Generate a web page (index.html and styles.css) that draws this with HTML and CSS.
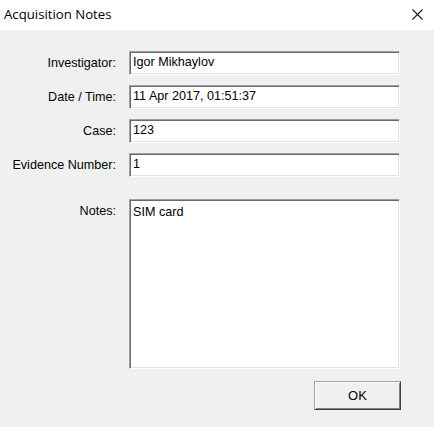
FILE: index.html
```html
<!DOCTYPE html>
<html>
<head>
<meta charset="utf-8">
<link rel="stylesheet" href="styles.css">
</head>
<body>
<div class="window">
  <div class="titlebar">
    <span class="title">Acquisition Notes</span>
    <svg class="close" width="11" height="11" viewBox="0 0 11 11"><path d="M0.5 0.5 L10.5 10.5 M10.5 0.5 L0.5 10.5" stroke="#1a1a1a" stroke-width="1.1" fill="none"/></svg>
  </div>
  <div class="form">
    <label class="lbl">Investigator:</label>
    <div class="field">Igor Mikhaylov</div>
    <label class="lbl">Date / Time:</label>
    <div class="field">11 Apr 2017, 01:51:37</div>
    <label class="lbl">Case:</label>
    <div class="field">123</div>
    <label class="lbl">Evidence Number:</label>
    <div class="field">1</div>
    <label class="lbl lbl-notes">Notes:</label>
    <div class="field notes">SIM card</div>
    <div class="actions">
      <div class="btn">OK</div>
    </div>
  </div>
</div>
</body>
</html>
```
FILE: styles.css
```css
html, body {
  margin: 0;
  padding: 0;
  background: #f0f0f0;
}
.window {
  width: 434px;
  height: 427px;
  background: #f0f0f0;
  font-family: "Liberation Sans", Arial, sans-serif;
  font-size: 12.6px;
  color: #000;
}
.titlebar {
  height: 30px;
  background: #fff;
  display: flex;
  align-items: center;
  justify-content: space-between;
  padding: 0 11px 0 4px;
}
.title {
  font-family: "Open Sans", "Noto Sans", sans-serif;
  font-size: 13.2px;
  color: #000;
  margin-top: -2px;
}
.close {
  display: block;
  margin-top: -1px;
}
.form {
  display: grid;
  grid-template-columns: 116px 271px;
  column-gap: 13px;
  row-gap: 10px;
  padding-top: 21px;
}
.lbl {
  text-align: right;
  line-height: 24px;
  height: 24px;
}
.field {
  height: 24px;
  box-sizing: border-box;
  background: #fff;
  border-top: 1px solid #a0a0a0;
  border-left: 1px solid #a0a0a0;
  border-right: 1px solid #fff;
  border-bottom: 1px solid #fff;
  box-shadow: inset 1px 1px 0 #696969, inset -1px -1px 0 #e3e3e3;
  padding: 0 3px 0 3px;
  line-height: 21px;
  white-space: nowrap;
}
.lbl-notes {
  margin-top: 12px;
}
.notes {
  margin-top: 12px;
  height: 170px;
  line-height: 18px;
  padding-top: 3px;
}
.actions {
  grid-column: 2;
  display: flex;
  justify-content: flex-end;
  padding-top: 2px;
}
.btn {
  width: 87px;
  height: 29px;
  box-sizing: border-box;
  margin-right: -1px;
  background: #f0f0f0;
  border-top: 1px solid #a0a0a0;
  border-left: 1px solid #a0a0a0;
  border-right: 1px solid #404040;
  border-bottom: 1px solid #404040;
  box-shadow: inset 1px 1px 0 #fff, inset -1px -1px 0 #808080;
  display: flex;
  align-items: center;
  justify-content: center;
  font-size: 13px;
}
```
